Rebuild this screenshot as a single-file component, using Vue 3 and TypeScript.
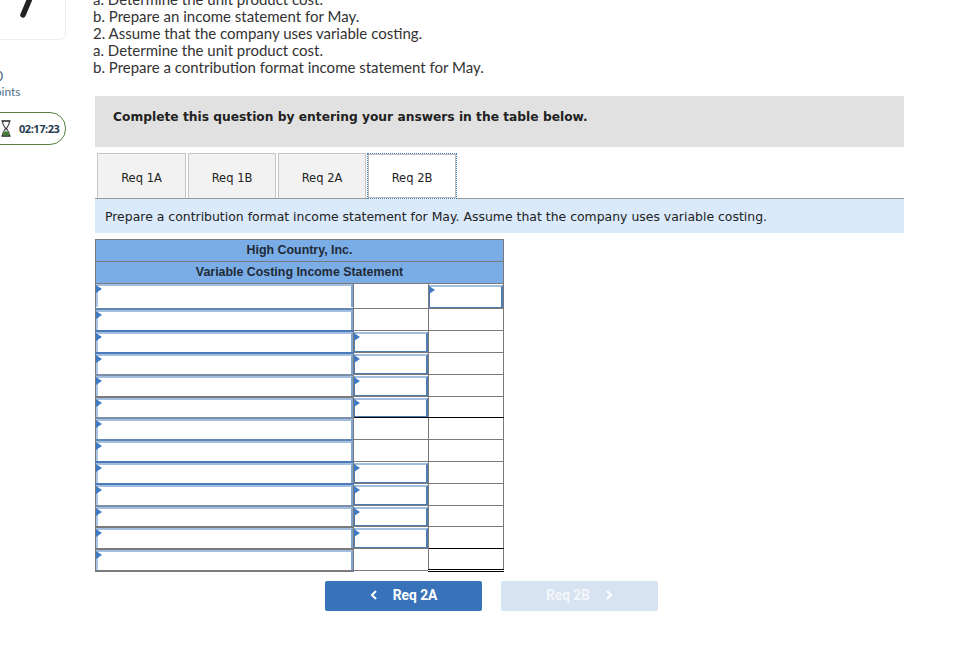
<script setup lang="ts">
interface Row {
  line: string
  second: boolean
  third: boolean
  short?: boolean
  total?: string
}

const tabs = ['Req 1A', 'Req 1B', 'Req 2A', 'Req 2B']

const lines = [
  'a. Determine the unit product cost.',
  'b. Prepare an income statement for May.',
  '2. Assume that the company uses variable costing.',
  'a. Determine the unit product cost.',
  'b. Prepare a contribution format income statement for May.',
]

const rows: Row[] = [
  { line: 'mid', second: false, third: true },
  { line: 'blue', second: false, third: false },
  { line: 'blue', second: true, third: false },
  { line: 'soft', second: true, third: false },
  { line: 'gray', second: true, third: false },
  { line: 'soft', second: true, third: false, short: true, total: 'single' },
  { line: 'mid', second: false, third: false },
  { line: 'blue', second: false, third: false },
  { line: 'blue', second: true, third: false },
  { line: 'soft', second: true, third: false },
  { line: 'gray', second: true, third: false, short: true },
  { line: 'gray', second: true, third: false, total: 'single' },
  { line: 'gray', second: false, third: false, total: 'double' },
]
</script>

<template>
  <div class="page">
    <aside class="side">
      <div class="number-card">
        <svg class="seven" width="16" height="20" viewBox="0 0 16 20">
          <path d="M12 -4 L4 15" fill="none" stroke="#222" stroke-width="5.500" stroke-linecap="round" />
        </svg>
      </div>
      <div class="score">0</div>
      <div class="points">points</div>
      <div class="timer">
        <svg width="12" height="17" viewBox="0 0 12 17">
          <path d="M1.500 1 H10.500 M1.500 16 H10.500" stroke="#222" stroke-width="1.600" />
          <path d="M2.500 1 C2.500 6 5 6.500 5.500 8.500 C5 10.500 2.500 11 2.500 16 M9.500 1 C9.500 6 7 6.500 6.500 8.500 C7 10.500 9.500 11 9.500 16" fill="none" stroke="#333" stroke-width="1.100" />
          <path d="M2.800 15.500 C3 12.500 5 11.500 6 11 C7 11.500 9 12.500 9.200 15.500 Z" fill="#3f7a2e" />
        </svg>
        <span>02:17:23</span>
      </div>
    </aside>

    <main class="main">
      <p v-for="(text, i) in lines" :key="i" class="intro">{{ text }}</p>

      <div class="banner">Complete this question by entering your answers in the table below.</div>

      <div class="tabs">
        <div
          v-for="(tab, i) in tabs"
          :key="tab"
          class="tab"
          :class="{ active: i === tabs.length - 1 }"
        >
          {{ tab }}
        </div>
      </div>

      <div class="prompt">Prepare a contribution format income statement for May. Assume that the company uses variable costing.</div>

      <table class="sheet">
        <colgroup>
          <col class="col-label">
          <col class="col-mid">
          <col class="col-total">
        </colgroup>
        <thead>
          <tr><th colspan="3">High Country, Inc.</th></tr>
          <tr><th colspan="3">Variable Costing Income Statement</th></tr>
        </thead>
        <tbody>
          <tr v-for="(row, i) in rows" :key="i" :class="{ tall: i === 0, short: row.short }">
            <td class="label-cell" :class="`line-${row.line}`">
              <span class="field"><input type="text"></span>
            </td>
            <td :class="{ 'rule-single': row.total === 'single' && i === 5 }">
              <span v-if="row.second" class="field"><input type="text"></span>
            </td>
            <td :class="row.total ? `rule-${row.total}` : ''">
              <span v-if="row.third" class="field"><input type="text"></span>
            </td>
          </tr>
        </tbody>
      </table>

      <div class="pager">
        <button class="nav" type="button">
          <svg width="8" height="12" viewBox="0 0 8 12"><path d="M6 2 L2 6 L6 10" fill="none" stroke="#fff" stroke-width="2" /></svg>
          <span>Req 2A</span>
        </button>
        <button class="nav off" type="button">
          <span>Req 2B</span>
          <svg width="8" height="12" viewBox="0 0 8 12"><path d="M2 2 L6 6 L2 10" fill="none" stroke="#fff" stroke-width="2" /></svg>
        </button>
      </div>
    </main>
  </div>
</template>

<style scoped>
.page {
  display: flex;
  width: 963px;
  height: 652px;
  overflow: hidden;
  background: #fff;
  font-family: Lato, 'Open Sans', sans-serif;
  color: #333;
}

.side {
  flex: 0 0 95px;
  width: 95px;
}

.number-card {
  width: 86px;
  height: 40px;
  margin-left: -20px;
  border: 1px solid #eee;
  border-top: 0;
  border-radius: 0 0 6px 6px;
  box-sizing: border-box;
  display: flex;
  justify-content: center;
}

.seven {
  display: block;
  margin-left: 7px;
}

.score {
  margin: 27px 0 0 -5px;
  font-size: 14px;
  line-height: 17px;
  color: #4a6785;
}

.points {
  margin: 0 0 0 -12px;
  font-size: 12px;
  line-height: 15px;
  color: #50708f;
}

.timer {
  display: flex;
  align-items: center;
  gap: 7px;
  width: 86px;
  height: 33px;
  margin: 13px 0 0 -20px;
  padding-left: 19px;
  box-sizing: border-box;
  border: 1px solid #55803f;
  border-radius: 0 16px 16px 0;
  font-family: 'Open Sans', sans-serif;
  font-size: 11px;
  font-weight: 700;
  color: #263b52;
  letter-spacing: -0.45px;
}

.main {
  flex: 0 0 809px;
  width: 809px;
  margin-top: -9px;
}

.intro {
  margin: 0 0 0 -2px;
  font-size: 15px;
  line-height: 17px;
  color: #333;
}

.banner {
  height: 51px;
  margin-top: 20px;
  padding: 13px 0 0 18px;
  box-sizing: border-box;
  background: #e1e1e1;
  font-family: 'DejaVu Sans', Verdana, sans-serif;
  font-size: 12.25px;
  font-weight: 700;
  line-height: 17px;
  color: #222;
}

.tabs {
  display: flex;
  gap: 2px;
  height: 46px;
  margin-top: 6px;
  padding-left: 2px;
  border-bottom: 1px solid #999;
  box-sizing: border-box;
}

.tab {
  display: flex;
  align-items: center;
  justify-content: center;
  width: 89px;
  height: 45px;
  padding-top: 3px;
  box-sizing: border-box;
  border: 1px solid #c6c6c6;
  border-bottom: 0;
  background: #f2f2f2;
  font-family: 'DejaVu Sans', Verdana, sans-serif;
  font-size: 11.5px;
  color: #222;
}

.tab:nth-child(2),
.tab:nth-child(3) {
  width: 88px;
}

.tab.active {
  width: 90px;
  height: 46px;
  margin-left: -1px;
  background: #fff;
  border: 1px dotted #3f7fc0;
  outline: 1px solid #bbb;
  outline-offset: -2px;
}

.prompt {
  height: 34px;
  padding-left: 10px;
  background: #daeafa;
  font-family: 'DejaVu Sans', Verdana, sans-serif;
  font-size: 12.45px;
  line-height: 35px;
  color: #222;
}

.sheet {
  width: 408px;
  margin-top: 6px;
  border-collapse: collapse;
  table-layout: fixed;
  font-family: 'Liberation Sans', Arial, sans-serif;
}

.col-label {
  width: 258px;
}

.col-mid {
  width: 75px;
}

.col-total {
  width: 75px;
}

.sheet th {
  height: 22px;
  padding: 0 0 2px;
  box-sizing: border-box;
  border: 1px solid #7a7a7a;
  background: #7aade6;
  font-size: 12.4px;
  font-weight: 700;
  color: #1f2a38;
  text-align: center;
}

.sheet td {
  height: 22px;
  padding: 0;
  box-sizing: border-box;
  border: 1px solid #7a7a7a;
  background: #fff;
}

.sheet tr.tall td {
  height: 25px;
}

.sheet tr.short td {
  height: 21px;
}

.sheet td.line-blue {
  border-bottom: 2px solid #4a7bb8;
}

.sheet td.line-mid {
  border-bottom: 2px solid #6286b3;
}

.sheet td.line-soft {
  border-bottom: 2px solid #7b90a8;
}

.sheet td.line-gray {
  border-bottom: 2px solid #7a7a7a;
}

.sheet td.rule-single {
  border-bottom: 1px solid #000;
}

.sheet td.rule-double {
  border-top: 1px solid #000;
  border-bottom: 3px double #000;
}

.field {
  position: relative;
  display: block;
  height: 20px;
}

tr.tall .field {
  height: 23px;
}

tr.short .field {
  height: 19px;
}

.field::before {
  content: '';
  position: absolute;
  top: 1px;
  left: 0;
  border-top: 4px solid transparent;
  border-bottom: 4px solid transparent;
  border-left: 6px solid #3f7bc4;
}

.field input {
  display: block;
  width: 100%;
  height: 100%;
  margin: 0;
  padding: 0;
  box-sizing: border-box;
  border: 2px solid #4f7bb3;
  border-top-color: #a3bfdf;
  border-bottom-width: 1px;
  border-left-width: 1px;
  background: #fff;
  border-radius: 0;
  outline: none;
}

.label-cell .field input {
  border-bottom: 0;
  border-left: 2px solid #a9c4e4;
  border-right-color: #7fa3cf;
}

.pager {
  display: flex;
  gap: 19px;
  margin-top: 9px;
  padding-left: 230px;
}

.nav {
  display: flex;
  align-items: center;
  justify-content: center;
  gap: 15px;
  width: 157px;
  height: 30px;
  padding: 0 0 2px;
  border: 0;
  border-radius: 2px;
  background: #3873ba;
  font-family: Roboto, sans-serif;
  font-size: 13.8px;
  font-weight: 700;
  color: #fff;
}

.nav.off {
  background: #d7e3f1;
  color: #f2f6fb;
}
</style>
